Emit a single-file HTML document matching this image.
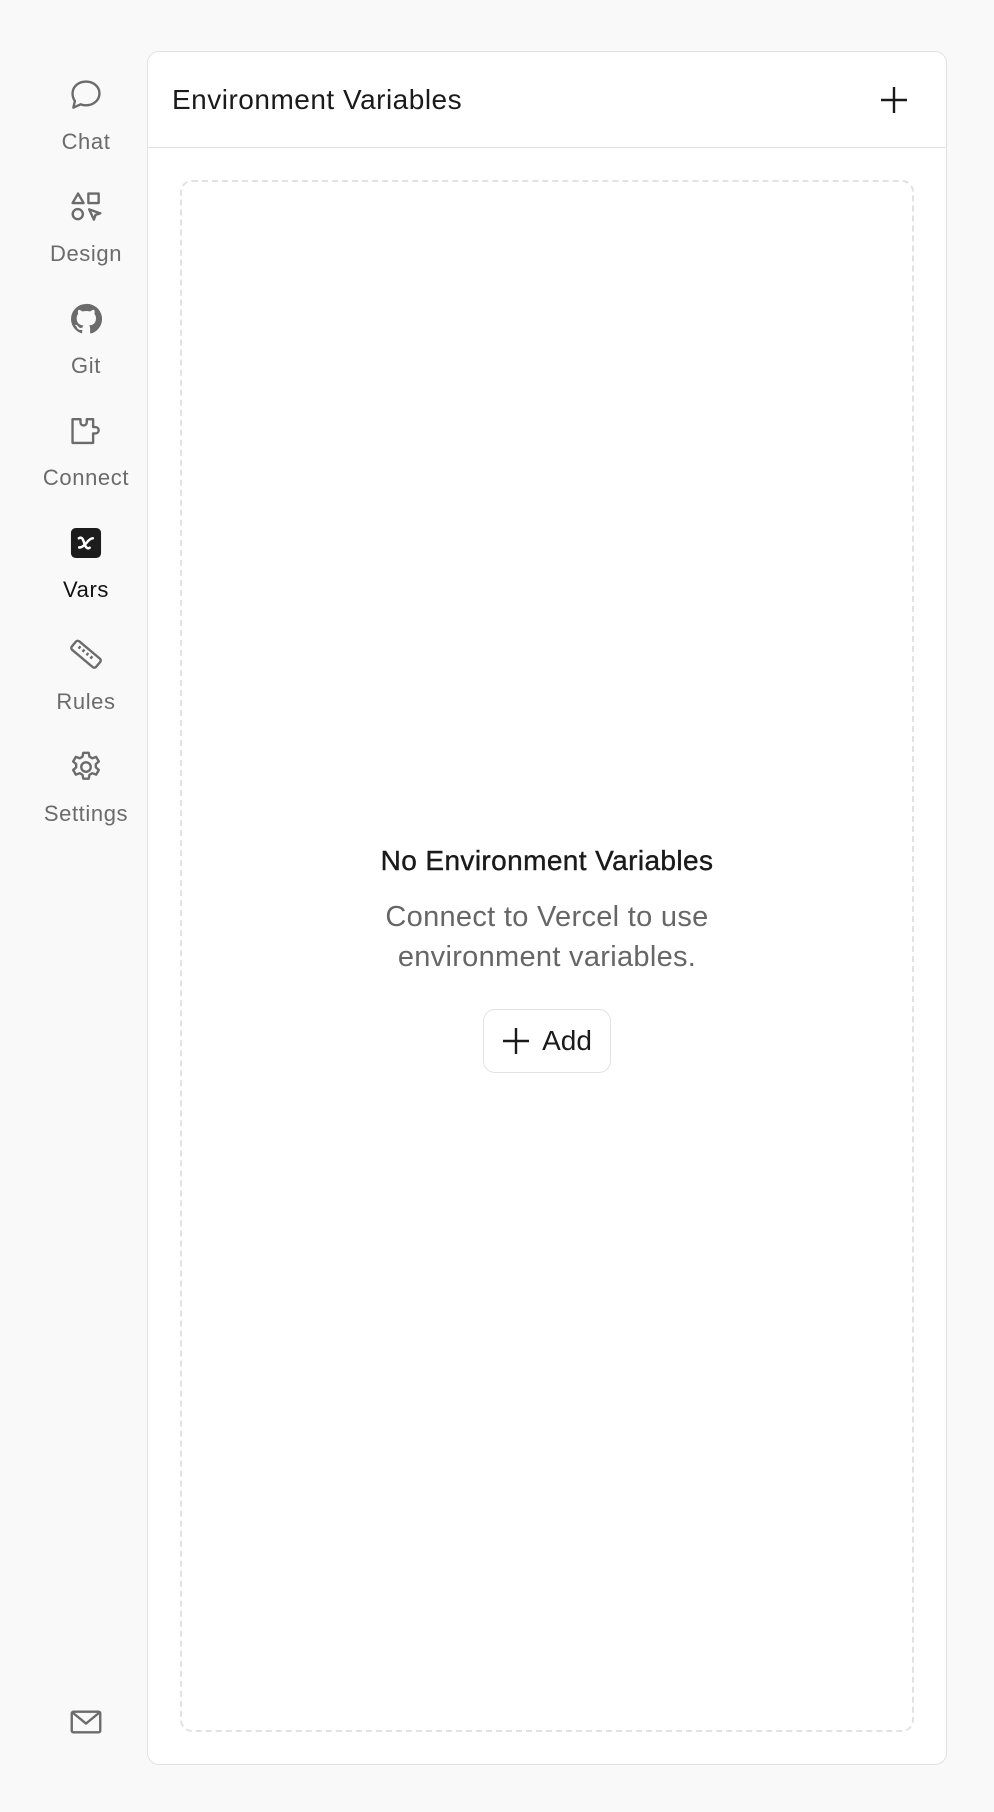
<!DOCTYPE html>
<html><head><meta charset="utf-8"><style>
*{box-sizing:border-box;margin:0;padding:0}
body{width:994px;height:1812px;background:#f9f9f9;font-family:"Liberation Sans",sans-serif;position:relative;overflow:hidden}
.nav{position:absolute;left:26px;width:120px;text-align:center;color:#6b6b6b;font-size:22px;letter-spacing:.6px}
.nav svg{display:block;margin:0 auto 15px}
.card{position:absolute;left:147px;top:51px;width:800px;height:1714px;background:#fff;border:1.5px solid #e2e2e2;border-radius:12px}
.hdr{height:96px;border-bottom:1.5px solid #e2e2e2;position:relative}
.hdr h1{position:absolute;left:24px;top:32px;font-size:28px;font-weight:400;color:#1a1a1a;letter-spacing:.5px}
.box{position:absolute;left:32px;top:128px;width:734px;height:1552px;border:2px dashed #e2e2e2;border-radius:12px}
.es{position:absolute;left:0;right:0;top:663px;text-align:center}
.es h2{font-size:28px;font-weight:400;color:#1a1a1a;-webkit-text-stroke:.4px #1a1a1a;letter-spacing:.4px}
.es p{font-size:29px;color:#666;line-height:40px;margin-top:20px;letter-spacing:.3px}
.btn{display:inline-flex;align-items:center;gap:12px;margin-top:32px;height:64px;padding:0 18px;border:1.5px solid #e2e2e2;border-radius:12px;font-size:28px;color:#1a1a1a}
</style></head><body>
<div class="nav" style="top:76px"><svg width="38" height="38" viewBox="0 0 24 24" fill="none" stroke="#6b6b6b" stroke-width="1.5" stroke-linejoin="round"><path d="M12 3.5c4.7 0 8.5 3.2 8.5 7.5s-3.8 7.5-8.5 7.5c-1.2 0-2.4-.2-3.4-.6L4 20l1-4.2C4 14.5 3.5 12.8 3.5 11 3.5 6.7 7.3 3.5 12 3.5z"/></svg>Chat</div>
<div class="nav" style="top:188px"><svg width="38" height="38" viewBox="0 0 24 24" fill="none" stroke="#6b6b6b" stroke-width="1.5" stroke-linejoin="round"><path d="M7 3.5l3.5 6h-7z"/><rect x="13.5" y="3.5" width="6.5" height="6"/><circle cx="6.8" cy="16.5" r="3.2"/><path d="M14 13.5l7 2.5-3 1 -1 3z"/></svg>Design</div>
<div class="nav" style="top:300px"><svg width="38" height="38" viewBox="0 0 24 24" fill="#6b6b6b"><path d="M12 2.5a9.5 9.5 0 0 0-3 18.5c.5.1.6-.2.6-.5v-1.7c-2.6.6-3.2-1.2-3.2-1.2-.4-1.1-1-1.4-1-1.4-.9-.6.1-.6.1-.6 1 .1 1.5 1 1.5 1 .9 1.5 2.3 1.1 2.8.8.1-.6.3-1.1.6-1.3-2.1-.2-4.3-1-4.3-4.7 0-1 .4-1.9 1-2.6-.1-.3-.4-1.2.1-2.5 0 0 .8-.3 2.6 1a9 9 0 0 1 4.8 0c1.8-1.3 2.6-1 2.6-1 .5 1.3.2 2.2.1 2.5.6.7 1 1.6 1 2.6 0 3.7-2.2 4.5-4.3 4.7.3.3.6.9.6 1.8v2.7c0 .3.2.6.7.5A9.5 9.5 0 0 0 12 2.5z"/></svg>Git</div>
<div class="nav" style="top:412px"><svg width="38" height="38" viewBox="0 0 24 24" fill="none" stroke="#6b6b6b" stroke-width="1.5" stroke-linejoin="round"><path d="M3.5 4.5h5v2a2 2 0 0 0 4 0v-2h4v5h1.5a2 2 0 0 1 0 4H16.5v6h-13z"/></svg>Connect</div>
<div class="nav" style="top:524px;color:#111"><svg width="38" height="38" viewBox="0 0 24 24"><rect x="2.5" y="2.5" width="19" height="19" rx="3" fill="#1c1c1c"/><path d="M7.5 9c1.5-1 2.5 0 3.3 2.8s2 4.2 3.5 3.2M16.3 9c-2 0-3.8 2.8-4.8 3.8s-2.3 2.2-3.8 2" stroke="#fff" stroke-width="1.6" fill="none" stroke-linecap="round"/></svg>Vars</div>
<div class="nav" style="top:636px"><svg width="38" height="38" viewBox="0 0 24 24" fill="none" stroke="#6b6b6b" stroke-width="1.5" stroke-linejoin="round"><rect x="2" y="8" width="20" height="7" rx="1.5" transform="rotate(40 12 11.5)"/><path d="M8.5 6.5l-1.2 1.5M11 8.5l-1.2 1.5M13.5 10.7l-1.2 1.5M16 12.8l-1.2 1.5"/></svg>Rules</div>
<div class="nav" style="top:748px"><svg width="38" height="38" viewBox="0 0 24 24" fill="none" stroke="#6b6b6b" stroke-width="1.5" stroke-linejoin="round"><path d="M10.3 3h3.4l.5 2.5 1.8 1 2.4-.9 1.7 2.9-1.9 1.7v2l1.9 1.7-1.7 2.9-2.4-.9-1.8 1-.5 2.5h-3.4l-.5-2.5-1.8-1-2.4.9-1.7-2.9 1.9-1.7v-2L3.9 8.5l1.7-2.9 2.4.9 1.8-1z"/><circle cx="12" cy="12" r="3"/></svg>Settings</div>
<div class="nav" style="top:1703px"><svg width="38" height="38" viewBox="0 0 24 24" fill="none" stroke="#6b6b6b" stroke-width="1.5" stroke-linejoin="round"><rect x="3" y="5.5" width="18" height="13" rx="1"/><path d="M3.5 6l8.5 7 8.5-7"/></svg></div>
<div class="card">
 <div class="hdr"><h1>Environment Variables</h1>
 <svg style="position:absolute;left:731px;top:33px" width="30" height="30" viewBox="0 0 30 30" stroke="#1a1a1a" stroke-width="2.4"><path d="M15 2v26M2 15h26"/></svg></div>
 <div class="box"><div class="es"><h2>No Environment Variables</h2><p>Connect to Vercel to use<br>environment variables.</p>
 <div class="btn"><svg width="28" height="28" viewBox="0 0 28 28" stroke="#1a1a1a" stroke-width="2.4"><path d="M14 1v26M1 14h26"/></svg>Add</div></div></div>
</div>
</body></html>
